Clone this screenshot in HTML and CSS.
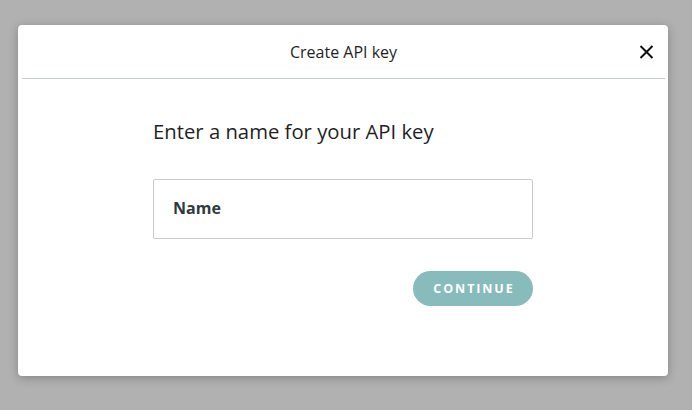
FILE: index.html
```html
<!DOCTYPE html>
<html>
<head>
<meta charset="utf-8">
<link rel="stylesheet" href="styles.css">
</head>
<body>
<div class="overlay">
  <div class="modal">
    <div class="modal-header">
      <div class="modal-title">Create API key</div>
      <button class="close-btn" aria-label="Close">
        <svg width="15" height="14" viewBox="0 0 15 14"><path d="M1.5 1 L13.5 13 M13.5 1 L1.5 13" stroke="#111" stroke-width="2" fill="none"/></svg>
      </button>
    </div>
    <div class="modal-body">
      <div class="form">
        <h2 class="prompt">Enter a name for your API key</h2>
        <div class="field"><span class="field-label">Name</span></div>
        <div class="actions"><button class="continue">CONTINUE</button></div>
      </div>
    </div>
  </div>
</div>
</body>
</html>
```
FILE: styles.css
```css
html, body { margin: 0; padding: 0; }
body {
  background: #b1b1b1;
  font-family: "Open Sans", "Noto Sans", sans-serif;
  width: 692px;
  height: 410px;
  overflow: hidden;
}
.overlay {
  padding: 25px 0 0 18px;
}
.modal {
  width: 650px;
  height: 351px;
  background: #fff;
  border-radius: 4px;
  box-shadow: 0 2px 10px rgba(0,0,0,0.25);
  display: flex;
  flex-direction: column;
}
.modal-header {
  position: relative;
  height: 53px;
  margin: 0 3px 0 4px;
  border-bottom: 1px solid #c4cdcf;
  display: flex;
  align-items: center;
  justify-content: center;
}
.modal-title {
  font-size: 16px;
  color: #1f1f1f;
}
.close-btn {
  position: absolute;
  right: 11px;
  top: 20px;
  border: 0;
  background: none;
  padding: 0;
  width: 15px;
  height: 14px;
  display: flex;
}
.modal-body {
  display: flex;
  justify-content: center;
}
.form {
  width: 380px;
  padding-top: 38px;
}
.prompt {
  margin: 0;
  font-size: 20.3px;
  font-weight: 400;
  color: #1f1f1f;
  line-height: 28px;
}
.field {
  margin-top: 34px;
  height: 58px;
  border: 1px solid #c5cdcc;
  border-radius: 2px;
  display: flex;
  align-items: center;
  padding-left: 19px;
}
.field-label {
  font-weight: 700;
  font-size: 16px;
  color: #2f3b40;
  margin-top: -2px;
}
.actions {
  margin-top: 32px;
  display: flex;
  justify-content: flex-end;
}
.continue {
  width: 120px;
  height: 35px;
  border: 0;
  border-radius: 18px;
  background: #88bbbb;
  color: #fff;
  font-family: "Open Sans", sans-serif;
  font-weight: 700;
  font-size: 12.5px;
  letter-spacing: 1.9px;
  padding: 0 0 0 2px;
}
```
